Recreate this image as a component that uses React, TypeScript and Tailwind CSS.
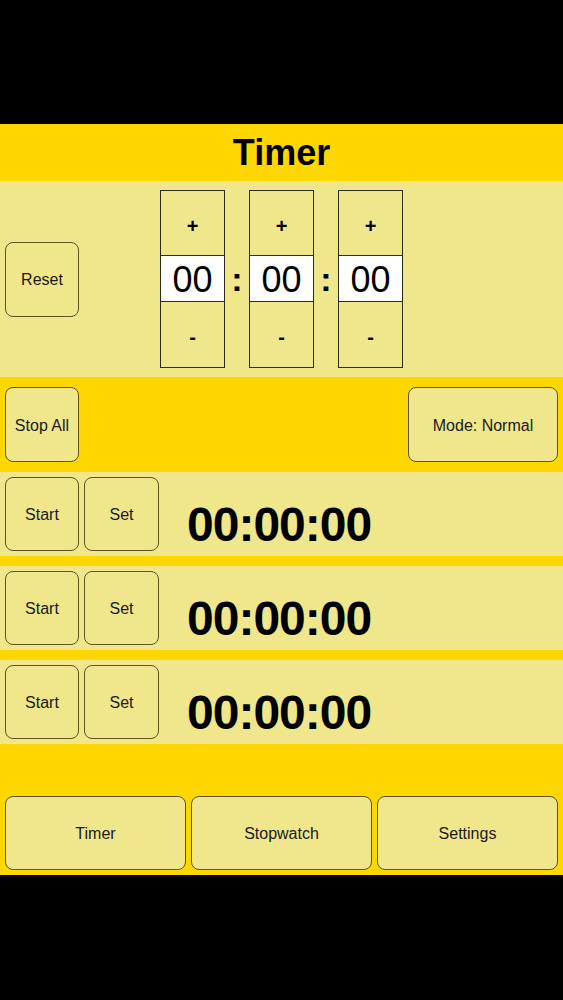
const btn =
  "flex items-center justify-center rounded-[8px] border border-[#5e5323] bg-[#F0E68C] pt-[2px] text-[16px] text-[#1a1a1a]";

function Spinner() {
  return (
    <div className="flex w-[65px] h-[178px] flex-col border border-[#2b2b1a]">
      <div className="flex h-[64px] items-center justify-center pt-[6px] text-[20px] font-bold text-black">+</div>
      <div className="flex h-[47px] items-center justify-center border-t border-b border-[#2b2b1a] bg-white pt-[2px] text-[36px] leading-none text-black">
        00
      </div>
      <div className="flex flex-1 items-center justify-center pt-[4px] text-[20px] font-bold text-black">-</div>
    </div>
  );
}

function Colon() {
  return (
    <div className="flex w-[24px] items-center justify-center text-[34px] font-bold leading-none text-black">
      :
    </div>
  );
}

function TimerRow() {
  return (
    <div className="flex h-[84px] items-center gap-[5px] bg-[#F0E68C] px-[5px]">
      <button className={`${btn} h-[74px] w-[74px]`}>Start</button>
      <button className={`${btn} h-[74px] w-[75px]`}>Set</button>
      <div className="ml-[23px] self-start mt-[29px] text-[48px] font-bold leading-none tracking-[-1px] text-black">
        00:00:00
      </div>
    </div>
  );
}

export default function App() {
  return (
    <div
      className="flex h-[1000px] w-full flex-col bg-black"
      style={{ fontFamily: '"Liberation Sans", Arial, sans-serif' }}
    >
      <div className="h-[124px] shrink-0" />
      <div className="flex flex-col bg-[#FFD700]">
        {/* Title */}
        <div className="flex h-[57px] items-center justify-center text-[36px] font-bold leading-none text-black">
          Timer
        </div>

        {/* Time picker */}
        <div className="grid h-[196px] grid-cols-[1fr_auto_1fr] items-center bg-[#F0E68C]">
          <div className="pl-[5px]">
            <button className={`${btn} h-[75px] w-[74px]`}>Reset</button>
          </div>
          <div className="flex">
            <Spinner />
            <Colon />
            <Spinner />
            <Colon />
            <Spinner />
          </div>
          <div />
        </div>

        {/* Controls */}
        <div className="flex h-[95px] items-center justify-between px-[5px]">
          <button className={`${btn} h-[75px] w-[74px]`}>Stop All</button>
          <button className={`${btn} h-[75px] w-[150px]`}>Mode: Normal</button>
        </div>

        {/* Timers */}
        <div className="flex flex-col gap-[10px]">
          <TimerRow />
          <TimerRow />
          <TimerRow />
        </div>

        <div className="h-[52px]" />

        {/* Tabs */}
        <div className="flex gap-[5px] px-[5px] pb-[5px]">
          <button className={`${btn} h-[74px] flex-1`}>Timer</button>
          <button className={`${btn} h-[74px] flex-1`}>Stopwatch</button>
          <button className={`${btn} h-[74px] flex-1`}>Settings</button>
        </div>
      </div>
    </div>
  );
}
